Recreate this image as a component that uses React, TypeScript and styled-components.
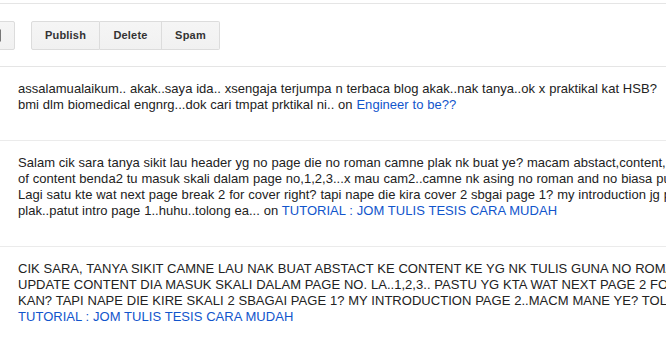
import styled, { createGlobalStyle } from 'styled-components';

const GlobalStyle = createGlobalStyle`
  html, body {
    margin: 0;
    padding: 0;
    background: #fff;
    overflow: hidden;
  }
  body {
    font-family: Arial, 'Liberation Sans', sans-serif;
  }
`;

const Page = styled.div`
  width: 100%;
  padding-top: 3px;
`;

const Toolbar = styled.div`
  display: flex;
  align-items: center;
  gap: 16px;
  height: 62px;
  border-top: 1px solid #e5e5e5;
  border-bottom: 1px solid #e5e5e5;
`;

const SelectButton = styled.div`
  display: flex;
  align-items: center;
  justify-content: flex-end;
  box-sizing: border-box;
  width: 46px;
  height: 29px;
  margin-left: -31px;
  padding-right: 13px;
  background: linear-gradient(#f5f5f5, #f1f1f1);
  border: 1px solid #dcdcdc;
  border-radius: 2px;
`;

const CheckBox = styled.span`
  display: block;
  width: 11px;
  height: 11px;
  border: 1px solid #777;
  border-radius: 1px;
  background: #fff;
`;

const ButtonGroup = styled.div`
  display: flex;
`;

const GroupButton = styled.button<{ $w: number }>`
  box-sizing: border-box;
  width: ${(p) => p.$w}px;
  height: 29px;
  padding: 0;
  margin: 0;
  font-family: Arial, 'Liberation Sans', sans-serif;
  font-size: 11px;
  font-weight: bold;
  letter-spacing: 0.2px;
  color: #333;
  background: linear-gradient(#f5f5f5, #f1f1f1);
  border: 1px solid #dcdcdc;
  border-left-width: 0;
  cursor: default;

  &:first-child {
    border-left-width: 1px;
    border-radius: 2px 0 0 2px;
  }
  &:last-child {
    border-radius: 0 2px 2px 0;
  }
`;

const CommentRow = styled.div`
  padding: 14px 0 27px 18px;
  border-bottom: 1px solid #ebebeb;
`;

const CommentText = styled.p`
  margin: 0;
  white-space: nowrap;
  font-size: 13px;
  line-height: 16px;
  letter-spacing: 0.03px;
  word-spacing: 0.15px;
  color: #222;
`;

const PostLink = styled.a`
  color: #15c;
  text-decoration: none;
`;

interface Comment {
  lines: string[];
  post: string;
  linkOwnLine?: boolean;
}

const comments: Comment[] = [
  {
    lines: [
      'assalamualaikum.. akak..saya ida.. xsengaja terjumpa n terbaca blog akak..nak tanya..ok x praktikal kat HSB?',
      'bmi dlm biomedical engnrg...dok cari tmpat prktikal ni..',
    ],
    post: 'Engineer to be??',
  },
  {
    lines: [
      'Salam cik sara tanya sikit lau header yg no page die no roman camne plak nk buat ye? macam abstact,content, list',
      'of content benda2 tu masuk skali dalam page no,1,2,3...x mau cam2..camne nk asing no roman and no biasa pun?',
      'Lagi satu kte wat next page break 2 for cover right? tapi nape die kira cover 2 sbgai page 1? my introduction jg page',
      'plak..patut intro page 1..huhu..tolong ea...',
    ],
    post: 'TUTORIAL : JOM TULIS TESIS CARA MUDAH',
  },
  {
    lines: [
      'CIK SARA, TANYA SIKIT CAMNE LAU NAK BUAT ABSTACT KE CONTENT KE YG NK TULIS GUNA NO ROMAN',
      'UPDATE CONTENT DIA MASUK SKALI DALAM PAGE NO. LA..1,2,3.. PASTU YG KTA WAT NEXT PAGE 2 FOR COVER',
      'KAN? TAPI NAPE DIE KIRE SKALI 2 SBAGAI PAGE 1? MY INTRODUCTION PAGE 2..MACM MANE YE? TOLONG..',
    ],
    post: 'TUTORIAL : JOM TULIS TESIS CARA MUDAH',
    linkOwnLine: true,
  },
];

export default function App() {
  return (
    <Page>
      <GlobalStyle />
      <Toolbar>
        <SelectButton>
          <CheckBox />
        </SelectButton>
        <ButtonGroup>
          <GroupButton $w={69}>Publish</GroupButton>
          <GroupButton $w={62}>Delete</GroupButton>
          <GroupButton $w={58}>Spam</GroupButton>
        </ButtonGroup>
      </Toolbar>
      {comments.map((c, i) => (
        <CommentRow key={i}>
          <CommentText>
            {c.lines.map((line, j) => (
              <span key={j}>
                {j > 0 && <br />}
                {line}
              </span>
            ))}
            {' on'}
            {c.linkOwnLine ? <br /> : ' '}
            <PostLink href="#">{c.post}</PostLink>
          </CommentText>
        </CommentRow>
      ))}
    </Page>
  );
}
